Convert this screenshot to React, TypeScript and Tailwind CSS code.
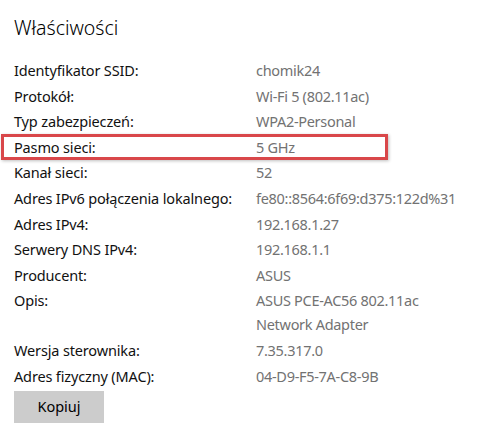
import React from 'react'

const rows: { label: string; value: string[]; highlight?: boolean }[] = [
  { label: 'Identyfikator SSID:', value: ['chomik24'] },
  { label: 'Protokół:', value: ['Wi-Fi 5 (802.11ac)'] },
  { label: 'Typ zabezpieczeń:', value: ['WPA2-Personal'] },
  { label: 'Pasmo sieci:', value: ['5 GHz'], highlight: true },
  { label: 'Kanał sieci:', value: ['52'] },
  { label: 'Adres IPv6 połączenia lokalnego:', value: ['fe80::8564:6f69:d375:122d%31'] },
  { label: 'Adres IPv4:', value: ['192.168.1.27'] },
  { label: 'Serwery DNS IPv4:', value: ['192.168.1.1'] },
  { label: 'Producent:', value: ['ASUS'] },
  { label: 'Opis:', value: ['ASUS PCE-AC56 802.11ac', 'Network Adapter'] },
  { label: 'Wersja sterownika:', value: ['7.35.317.0'] },
  { label: 'Adres fizyczny (MAC):', value: ['04-D9-F5-7A-C8-9B'] },
]

const App: React.FC = () => {
  return (
    <div className="w-[478px] h-[447px] bg-white overflow-hidden pl-[14px] pt-[14px] font-['Noto_Sans',sans-serif]">
      <h1 className="text-[19.5px] leading-[28px] font-light text-black">Właściwości</h1>

      <div className="mt-[16px] flex flex-col gap-[1.6px] text-[14.5px] tracking-[-0.15px] leading-[24px]">
        {rows.map((row) => (
          <div key={row.label} className="relative flex">
            {row.highlight && (
              <div className="absolute -left-[13px] -top-[1px] -bottom-[1px] w-[387px] border-[3px] border-[#d9474a] shadow-[1px_1px_3px_rgba(0,0,0,0.25)]" />
            )}
            <div className="w-[242px] shrink-0 text-[#111]">{row.label}</div>
            <div className="text-[#727272] tracking-[-0.3px]">
              {row.value.map((line) => (
                <div key={line}>{line}</div>
              ))}
            </div>
          </div>
        ))}
      </div>

      <button className="mt-[3px] w-[90px] h-[32px] bg-[#cccccc] text-[14.5px] text-black">Kopiuj</button>
    </div>
  )
}

export default App
